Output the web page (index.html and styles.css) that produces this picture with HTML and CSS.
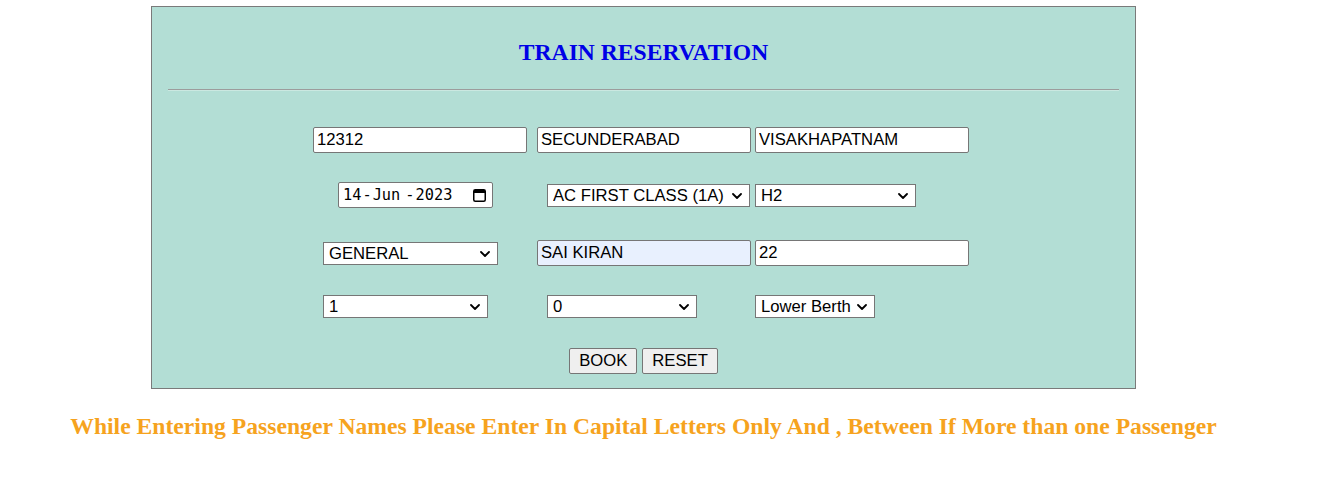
FILE: index.html
```html
<!DOCTYPE html>
<html lang="en">
<head>
<meta charset="utf-8">
<title>Train Reservation</title>
<link rel="stylesheet" href="styles.css">
</head>
<body>
<div class="page">
  <div class="panel">
    <h3 class="title">TRAIN RESERVATION</h3>
    <hr class="rule">
    <form class="form">
      <input class="txt" type="text" value="12312">
      <input class="txt" type="text" value="SECUNDERABAD">
      <input class="txt" type="text" value="VISAKHAPATNAM">

      <div class="date o25">
        <span class="date-text"><span>14</span><span class="sep">-</span><span>Jun</span><span class="sep sep2">-</span><span>2023</span></span>
        <svg class="cal" width="13" height="13" viewBox="0 0 13 13" aria-hidden="true">
          <rect x="0.75" y="0.75" width="11.5" height="11.5" rx="1.5" fill="none" stroke="#000" stroke-width="1.5"/>
          <rect x="1" y="1" width="11" height="3" fill="#000"/>
        </svg>
      </div>
      <span class="selbox o10"><select class="sel w203"><option>AC FIRST CLASS (1A)</option></select><svg class="chev" width="10" height="6" viewBox="0 0 10 6" aria-hidden="true"><path d="M1 1 L5 5 L9 1" fill="none" stroke="#000" stroke-width="1.8" stroke-linecap="round" stroke-linejoin="round"/></svg></span>
      <span class="selbox"><select class="sel w161"><option>H2</option></select><svg class="chev" width="10" height="6" viewBox="0 0 10 6" aria-hidden="true"><path d="M1 1 L5 5 L9 1" fill="none" stroke="#000" stroke-width="1.8" stroke-linecap="round" stroke-linejoin="round"/></svg></span>

      <span class="selbox o10"><select class="sel w175"><option>GENERAL</option></select><svg class="chev" width="10" height="6" viewBox="0 0 10 6" aria-hidden="true"><path d="M1 1 L5 5 L9 1" fill="none" stroke="#000" stroke-width="1.8" stroke-linecap="round" stroke-linejoin="round"/></svg></span>
      <input class="txt filled" type="text" value="SAI KIRAN">
      <input class="txt" type="text" value="22">

      <span class="selbox o10"><select class="sel w165"><option>1</option></select><svg class="chev" width="10" height="6" viewBox="0 0 10 6" aria-hidden="true"><path d="M1 1 L5 5 L9 1" fill="none" stroke="#000" stroke-width="1.8" stroke-linecap="round" stroke-linejoin="round"/></svg></span>
      <span class="selbox o10"><select class="sel w150"><option>0</option></select><svg class="chev" width="10" height="6" viewBox="0 0 10 6" aria-hidden="true"><path d="M1 1 L5 5 L9 1" fill="none" stroke="#000" stroke-width="1.8" stroke-linecap="round" stroke-linejoin="round"/></svg></span>
      <span class="selbox"><select class="sel w120"><option>Lower Berth</option></select><svg class="chev" width="10" height="6" viewBox="0 0 10 6" aria-hidden="true"><path d="M1 1 L5 5 L9 1" fill="none" stroke="#000" stroke-width="1.8" stroke-linecap="round" stroke-linejoin="round"/></svg></span>
    </form>
    <div class="actions">
      <button class="btn" type="button">BOOK</button>
      <button class="btn" type="button">RESET</button>
    </div>
  </div>
  <h3 class="note">While Entering Passenger Names Please Enter In Capital Letters Only And , Between If More than one Passenger</h3>
</div>
</body>
</html>
```
FILE: styles.css
```css
body {
  margin: 0;
  background: #ffffff;
  font-family: "Liberation Serif", "Times New Roman", serif;
}

.page {
  width: 1287px;
  padding-top: 6px;
}

.panel {
  box-sizing: border-box;
  width: 985px;
  margin: 0 auto;
  border: 1px solid #7a7a7a;
  background: #b3ded5;
  padding-bottom: 14px;
}

.title {
  margin: 32px 0 0;
  text-align: center;
  font: bold 23.6px/26px "Liberation Serif", "Times New Roman", serif;
  color: #0000e6;
}

.rule {
  margin: 24px 16px 0;
  height: 0;
  border: 0;
  border-top: 1px solid #9c9c9c;
  border-bottom: 1px solid #cbe8e1;
}

.form {
  display: grid;
  grid-template-columns: 224px 218px 213px;
  grid-template-rows: 56px 54px 62px 45px;
  align-items: center;
  justify-items: start;
  padding-left: 161px;
  margin: 21px 0 0;
}

.o25 { margin-left: 25px; }
.o10 { margin-left: 10px; }

.txt {
  box-sizing: border-box;
  width: 214px;
  height: 26px;
  margin: 0;
  padding: 1px 3px;
  border: 1px solid #767676;
  border-radius: 2px;
  background: #ffffff;
  color: #000000;
  font: 16.67px "Liberation Sans", Arial, sans-serif;
}

.txt.filled {
  background: #e8f0fe;
}

.selbox {
  position: relative;
  display: block;
}

.sel {
  display: block;
  box-sizing: border-box;
  height: 23px;
  margin: 0;
  padding: 0 20px 0 5px;
  border: 1px solid #767676;
  border-radius: 0;
  background-color: #ffffff;
  color: #000000;
  font: 16.67px "Liberation Sans", Arial, sans-serif;
  appearance: none;
  -webkit-appearance: none;
}

.chev {
  position: absolute;
  right: 8px;
  top: 9px;
  pointer-events: none;
}

.w203 { width: 203px; }
.w161 { width: 161px; }
.w175 { width: 175px; }
.w165 { width: 165px; }
.w150 { width: 150px; }
.w120 { width: 120px; }

.date {
  box-sizing: border-box;
  width: 155px;
  height: 26px;
  display: flex;
  align-items: center;
  justify-content: space-between;
  padding: 0 6px 0 4px;
  border: 1px solid #767676;
  border-radius: 2px;
  background: #ffffff;
  color: #000000;
  font: 15.3px "DejaVu Sans Mono", "Liberation Mono", monospace;
}

.date-text {
  display: flex;
  white-space: pre;
}

.sep {
  margin: 0 1px;
}

.sep2 {
  margin-left: 5px;
}

.cal {
  display: block;
  flex: none;
}

.actions {
  display: flex;
  justify-content: center;
  gap: 5px;
  margin-top: 19px;
}

.btn {
  box-sizing: border-box;
  height: 26px;
  margin: 0;
  padding: 0 9px;
  border: 1px solid #767676;
  border-radius: 2px;
  background: #efefef;
  color: #000000;
  font: 16.67px "Liberation Sans", Arial, sans-serif;
}

.note {
  margin: 24px 0 0;
  text-align: center;
  font: bold 23.65px/26px "Liberation Serif", "Times New Roman", serif;
  color: #f6a31e;
}
```
